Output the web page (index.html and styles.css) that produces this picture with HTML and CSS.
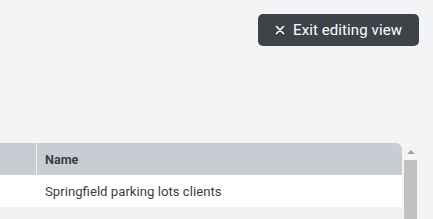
FILE: index.html
```html
<!DOCTYPE html>
<html>
<head>
<meta charset="utf-8">
<link rel="stylesheet" href="styles.css">
</head>
<body>
<div class="page">
  <header class="toolbar">
    <button class="exit-btn">
      <svg class="x-icon" width="10" height="10" viewBox="0 0 10 10"><path d="M1.5 1.5 L8.5 8.5 M8.5 1.5 L1.5 8.5" stroke="#fff" stroke-width="1.6" stroke-linecap="round"/></svg>
      <span>Exit editing view</span>
    </button>
  </header>
  <div class="grid-area">
    <div class="table">
      <div class="row head">
        <div class="cell sel"></div>
        <div class="cell name">Name</div>
      </div>
      <div class="row">
        <div class="cell sel"></div>
        <div class="cell name">Springfield parking lots clients</div>
      </div>
      <div class="row alt">
        <div class="cell sel"></div>
        <div class="cell name"></div>
      </div>
    </div>
    <div class="scrollbar">
      <div class="arrow"></div>
      <div class="thumb"></div>
    </div>
  </div>
</div>
</body>
</html>
```
FILE: styles.css
```css
html, body {
  margin: 0;
  padding: 0;
  background: #f3f4f6;
  font-family: Roboto, "Liberation Sans", sans-serif;
  overflow: hidden;
}
.page {
  width: 433px;
  height: 219px;
  overflow: hidden;
}
.toolbar {
  display: flex;
  justify-content: flex-end;
  padding: 14px 14px 0 0;
  height: 32px;
}
.exit-btn {
  display: flex;
  align-items: center;
  gap: 8px;
  height: 32px;
  width: 161px;
  padding: 0 0 0 17px;
  border: none;
  border-radius: 5px;
  background: #3e4249;
  color: #fff;
  font-family: Roboto, "Liberation Sans", sans-serif;
  font-size: 15px;
  letter-spacing: 0.1px;
  box-sizing: border-box;
}
.x-icon { flex: none; }
.grid-area {
  display: flex;
  margin-top: 97px;
}
.table {
  width: 402px;
  background: #fff;
  border-top-right-radius: 6px;
  overflow: hidden;
}
.row {
  display: flex;
  height: 32px;
  align-items: stretch;
  background: #fff;
  font-size: 13.2px;
  color: #3b3f45;
}
.row.alt { background: #f0f0f0; }
.row.head {
  background: #c8cdd4;
  font-weight: 700;
  color: #3a3f47;
  font-size: 12.6px;
}
.cell {
  display: flex;
  align-items: center;
}
.cell.sel {
  width: 36px;
  flex: none;
}
.row.head .cell.sel { border-right: 1px solid #eef0f3; }
.row:not(.head) .cell.sel { border-right: 1px solid transparent; }
.cell.name { padding-left: 8px; }
.scrollbar {
  width: 13px;
  margin-left: 2px;
  display: flex;
  flex-direction: column;
  align-items: center;
}
.arrow {
  margin-top: 7px;
  width: 0;
  height: 0;
  border-left: 4px solid transparent;
  border-right: 4px solid transparent;
  border-bottom: 4px solid #a3a3a3;
}
.thumb {
  margin-top: 6px;
  width: 13px;
  height: 80px;
  background: #c1c1c1;
}
```
